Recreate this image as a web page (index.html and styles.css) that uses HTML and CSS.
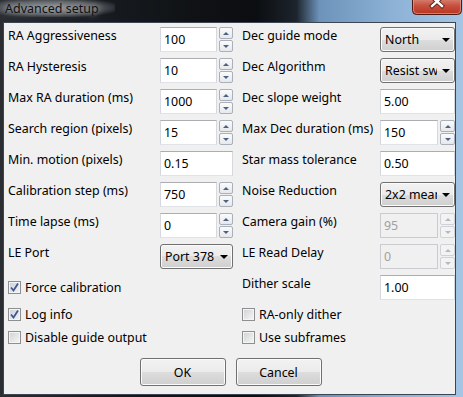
FILE: index.html
```html
<!DOCTYPE html>
<html lang="en">
<head>
  <meta charset="UTF-8" />
  <title>Advanced setup</title>
  <link rel="stylesheet" href="styles.css">
</head>
<body>
  <div class="window">
    <div class="titlebar">
      <span class="title">Advanced setup</span>
      <svg class="close" width="50" height="15" viewBox="0 0 50 15">
        <defs>
          <linearGradient id="red" x1="0" y1="0" x2="0" y2="1">
            <stop offset="0" stop-color="#d98a7c" />
            <stop offset="0.45" stop-color="#c8513f" />
            <stop offset="1" stop-color="#b63420" />
          </linearGradient>
        </defs>
        <path d="M0.5 -2 V10.5 Q0.5 14.5 4.5 14.5 H45.5 Q49.5 14.5 49.5 10.5 V-2 Z" fill="url(#red)" stroke="#4e1a12" />
        <path d="M1.5 -2 V10 Q1.5 13.5 5 13.5 H45 Q48.5 13.5 48.5 10 V-2" fill="none" stroke="#e9a79a" stroke-opacity="0.6" />
        <path d="M20 -3 L30 6 M30 -3 L20 6" stroke="#5a1d14" stroke-width="4.2" stroke-linecap="square" />
        <path d="M20 -3 L30 6 M30 -3 L20 6" stroke="#fff" stroke-width="2.4" stroke-linecap="square" />
      </svg>
    </div>
    <div class="client">
      <div class="columns">
        <div class="col left">
          <span class="label">RA Aggressiveness</span>
          <div class="spin-field"><input type="text" value="100"><span class="spin"><b class="up"></b><b class="down"></b></span></div>

          <span class="label">RA Hysteresis</span>
          <div class="spin-field"><input type="text" value="10"><span class="spin"><b class="up"></b><b class="down"></b></span></div>

          <span class="label">Max RA duration (ms)</span>
          <div class="spin-field"><input type="text" value="1000"><span class="spin"><b class="up"></b><b class="down"></b></span></div>

          <span class="label">Search region (pixels)</span>
          <div class="spin-field"><input type="text" value="15"><span class="spin"><b class="up"></b><b class="down"></b></span></div>

          <span class="label">Min. motion (pixels)</span>
          <input class="text-field" type="text" value="0.15">

          <span class="label">Calibration step (ms)</span>
          <div class="spin-field"><input type="text" value="750"><span class="spin"><b class="up"></b><b class="down"></b></span></div>

          <span class="label">Time lapse (ms)</span>
          <div class="spin-field"><input type="text" value="0"><span class="spin"><b class="up"></b><b class="down"></b></span></div>

          <span class="label">LE Port</span>
          <div class="combo"><span class="combo-text">Port 378</span><i class="arrow"></i></div>

          <div class="check wide"><span class="box checked"><svg width="11" height="11" viewBox="0 0 11 11"><path d="M2 5.5 L4.5 8.5 L9 1.5" fill="none" stroke="#43568a" stroke-width="1.8" /></svg></span>Force calibration</div>
        </div>

        <div class="col right">
          <span class="label">Dec guide mode</span>
          <div class="combo"><span class="combo-text">North</span><i class="arrow"></i></div>

          <span class="label">Dec Algorithm</span>
          <div class="combo"><span class="combo-text">Resist switches</span><i class="arrow"></i></div>

          <span class="label">Dec slope weight</span>
          <input class="text-field" type="text" value="5.00">

          <span class="label">Max Dec duration (ms)</span>
          <div class="spin-field"><input type="text" value="150"><span class="spin"><b class="up"></b><b class="down"></b></span></div>

          <span class="label">Star mass tolerance</span>
          <input class="text-field" type="text" value="0.50">

          <span class="label">Noise Reduction</span>
          <div class="combo"><span class="combo-text">2x2 mean</span><i class="arrow"></i></div>

          <span class="label">Camera gain (%)</span>
          <div class="spin-field disabled"><input type="text" value="95" disabled><span class="spin"><b class="up"></b><b class="down"></b></span></div>

          <span class="label">LE Read Delay</span>
          <div class="spin-field disabled"><input type="text" value="0" disabled><span class="spin"><b class="up"></b><b class="down"></b></span></div>

          <span class="label">Dither scale</span>
          <input class="text-field" type="text" value="1.00">
        </div>
      </div>

      <div class="checks">
        <div class="check"><span class="box checked"><svg width="11" height="11" viewBox="0 0 11 11"><path d="M2 5.5 L4.5 8.5 L9 1.5" fill="none" stroke="#43568a" stroke-width="1.8" /></svg></span>Log info</div>
        <div class="check"><span class="box"></span>RA-only dither</div>
        <div class="check"><span class="box"></span>Disable guide output</div>
        <div class="check"><span class="box"></span>Use subframes</div>
      </div>

      <div class="buttons">
        <button class="btn">OK</button>
        <button class="btn">Cancel</button>
      </div>
    </div>
  </div>
</body>
</html>
```

FILE: styles.css
```css
body {
  margin: 0;
  font-family: 'Noto Sans', 'Open Sans', sans-serif;
  font-size: 12.4px;
  color: #000;
  background: #15181c;
}
.window {
  width: 463px;
  height: 397px;
  box-sizing: border-box;
  padding: 0 7px 2px 3px;
  display: flex;
  flex-direction: column;
  background: linear-gradient(90deg, #2a2e33 0, #16191d 25%, #0b0d10 55%, #1d242c 64%, #6d93ba 69%, #8db2d6 85%, #a4c5e4 100%);
}
.titlebar {
  height: 22px;
  display: flex;
  justify-content: space-between;
  align-items: flex-start;
  margin-left: -3px;
  margin-right: -6px;
}
.title {
  padding: 0 16px 0 5px;
  line-height: 17px;
  font-size: 12.5px;
  color: #111;
  background: radial-gradient(ellipse at 45% 45%, rgba(150, 155, 160, 0.9) 0, rgba(110, 115, 120, 0.75) 50%, rgba(60, 64, 68, 0) 80%);
  text-shadow: 0 0 6px rgba(220, 225, 230, 0.8);
}
.close {
  display: block;
}

.client {
  flex: 1;
  background: #f0f0f0;
  border: 1px solid #3d4650;
  padding: 4px 0 0 4px;
}
.columns {
  display: flex;
  gap: 9px;
}
.col {
  display: grid;
  grid-auto-rows: 25px;
  row-gap: 6px;
}
.col.left {
  grid-template-columns: 152px 73px;
}
.col.right {
  grid-template-columns: 138px 75px;
}
.label {
  line-height: 16px;
  padding-top: 1px;
  white-space: nowrap;
}

input {
  font-family: inherit;
  font-size: 12.4px;
  color: #000;
  box-sizing: border-box;
  height: 25px;
  margin: 0;
  padding: 0 3px;
  border: 1px solid;
  border-color: #abadb3 #d5d8de #dfe3e8 #d5d8de;
  background: #fff;
  outline: none;
}
.text-field {
  width: 100%;
}
.spin-field {
  display: flex;
  gap: 2px;
}
.spin-field input {
  flex: 1;
  min-width: 0;
}
.spin {
  width: 14px;
  display: flex;
  flex-direction: column;
  gap: 1px;
}
.col.right .spin {
  width: 15px;
}
.spin b {
  flex: 1;
  display: flex;
  align-items: center;
  justify-content: center;
  border: 1px solid #a9b0ba;
  border-radius: 2px;
  background: linear-gradient(#fbfbfb, #e6e8eb);
}
.spin b::after {
  content: '';
  border-left: 3px solid transparent;
  border-right: 3px solid transparent;
}
.spin .up::after {
  border-bottom: 3px solid #4d6185;
}
.spin .down::after {
  border-top: 3px solid #4d6185;
}
.spin-field.disabled input {
  background: #f0f0f0;
  color: #a0a0a0;
  border-color: #c9cbce;
}
.spin-field.disabled .spin b {
  border-color: #cfd2d6;
  background: #f3f3f3;
}
.spin-field.disabled .up::after {
  border-bottom-color: #b5b8bd;
}
.spin-field.disabled .down::after {
  border-top-color: #b5b8bd;
}

.combo,
.btn {
  box-sizing: border-box;
  border: 1px solid #707070;
  border-radius: 3px;
  background: linear-gradient(#f2f2f2 0, #ebebeb 50%, #dddddd 50%, #cfcfcf 100%);
  box-shadow: inset 0 0 0 1px #fbfbfb;
}
.combo {
  display: flex;
  align-items: center;
  padding-left: 4px;
}
.combo-text {
  flex: 1;
  overflow: hidden;
  white-space: nowrap;
  line-height: 16px;
}
.arrow {
  width: 17px;
  display: flex;
  justify-content: center;
}
.arrow::after {
  content: '';
  border-left: 4px solid transparent;
  border-right: 4px solid transparent;
  border-top: 4px solid #000;
}

.check {
  display: flex;
  align-items: center;
  gap: 4px;
  white-space: nowrap;
}
.check.wide {
  grid-column: span 2;
}
.box {
  width: 13px;
  height: 13px;
  box-sizing: border-box;
  border: 1px solid #8e8f8f;
  background: linear-gradient(135deg, #cfd1d4, #f7f7f7);
  box-shadow: inset 0 0 0 1px #f4f4f4;
  display: flex;
  align-items: center;
  justify-content: center;
}
.box.checked {
  background: linear-gradient(135deg, #c9d1de, #f3f5f8);
}
.checks {
  margin-top: 6px;
  display: grid;
  grid-template-columns: 234px 1fr;
  grid-auto-rows: 17px;
  row-gap: 6px;
}

.buttons {
  margin-top: 12px;
  display: flex;
  justify-content: center;
  gap: 10px;
  padding-right: 2px;
}
.btn {
  width: 86px;
  height: 28px;
  font-family: inherit;
  font-size: 12.4px;
  color: #000;
  padding: 0;
}
```
